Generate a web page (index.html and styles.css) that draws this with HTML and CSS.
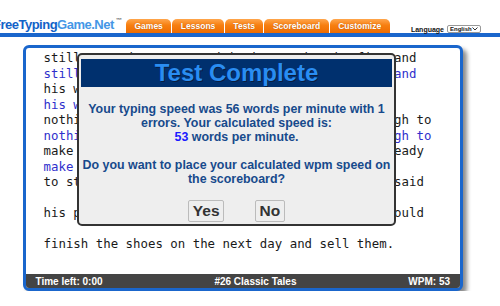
FILE: index.html
```html
<!DOCTYPE html>
<html lang="en">

<head>
  <meta charset="UTF-8" />
  <title>FreeTypingGame.Net - Test Complete</title>
  <link rel="stylesheet" href="styles.css">
</head>

<body>
  <div class="topbar">
    <div class="logo"><span class="logo-dark">FreeTyping</span><span class="logo-light">Game.Net</span><sup>™</sup></div>
    <div class="tabs">
      <a class="tab">Games</a>
      <a class="tab">Lessons</a>
      <a class="tab">Tests</a>
      <a class="tab">Scoreboard</a>
      <a class="tab">Customize</a>
    </div>
    <div class="lang">
      Language
      <span class="lang-select">English
        <svg width="6" height="4" viewBox="0 0 6 4"><path d="M0.5 0.5 L3 3 L5.5 0.5" fill="none" stroke="#333" stroke-width="1"/></svg>
      </span>
    </div>
  </div>

  <div class="board">
    <div class="text">
      <div class="line">still a good man. One night he sat by the fire and</div>
      <div class="line typed">still a good man. One night he sat by the fire and</div>
      <div class="line">his wife. They were so poor that they had</div>
      <div class="line typed">his wife. They were so poor that they had</div>
      <div class="line">nothing left save a piece of leather, just enough to</div>
      <div class="line typed">nothing left save a piece of leather, just enough to</div>
      <div class="line">make one pair of shoes. He cut them out to be ready</div>
      <div class="line typed">make one pair of shoes. He cut</div>
      <div class="line">to start work on them the next morning, and he said</div>
      <div class="line"></div>
      <div class="line">his prayers and went to sleep, hoping that he would</div>
      <div class="line"></div>
      <div class="line">finish the shoes on the next day and sell them.</div>
    </div>

    <div class="status">
      <span>Time left: 0:00</span>
      <span>#26 Classic Tales</span>
      <span>WPM: 53</span>
    </div>

    <div class="dialog">
      <div class="dialog-title">Test Complete</div>
      <div class="dialog-body">
        Your typing speed was 56 words per minute with 1<br>
        errors. Your calculated speed is:<br>
        <span class="score">53</span> words per minute.<br>
        <br>
        Do you want to place your calculated wpm speed on<br>
        the scoreboard?
      </div>
      <div class="dialog-actions">
        <button class="dialog-btn">Yes</button>
        <button class="dialog-btn">No</button>
      </div>
    </div>
  </div>
</body>

</html>
```

FILE: styles.css
```css
body,
html {
  margin: 0;
  padding: 0;
  background: #fff;
  font-family: 'Liberation Sans', Arial, sans-serif;
  color: #222;
  overflow: hidden;
}

.topbar {
  display: flex;
  align-items: flex-end;
  height: 33px;
  border-bottom: 4px solid #1a66cc;
}

.logo {
  flex-shrink: 0;
  width: 133px;
  margin-left: -7px;
  margin-bottom: 1px;
  font-size: 13px;
  line-height: 15px;
  font-weight: bold;
  letter-spacing: -0.5px;
  white-space: nowrap;
}

.logo-dark {
  color: #1262c8;
}

.logo-light {
  color: #4497e6;
}

.logo sup {
  font-size: 6px;
  color: #666;
  letter-spacing: 0;
  vertical-align: 7px;
  margin-left: 2px;
}

.tabs {
  display: flex;
  gap: 1px;
}

.tab {
  display: block;
  height: 14px;
  padding: 0 8.5px;
  line-height: 14px;
  font-size: 8.5px;
  font-weight: bold;
  color: #fff;
  background: linear-gradient(#ffa64d, #f77f10 45%, #ee6c00);
  border-radius: 5px 5px 0 0;
  text-shadow: 0 0 1px rgba(120, 50, 0, 0.5);
}

.lang {
  display: flex;
  align-items: center;
  gap: 3px;
  margin-left: auto;
  margin-right: 19px;
  height: 8px;
  font-size: 7px;
  font-weight: bold;
  color: #111;
}

.lang-select {
  display: flex;
  align-items: center;
  justify-content: space-between;
  box-sizing: border-box;
  width: 34px;
  height: 8px;
  padding: 0 2px;
  border: 1px solid #999;
  border-radius: 2px;
  font-size: 6px;
  background: #fff;
}

.board {
  position: relative;
  display: flex;
  flex-direction: column;
  width: 434px;
  height: 240px;
  margin: 8px 0 0 23px;
  border: 3px solid #1a66cc;
  border-radius: 6px;
  background: #fff;
  box-shadow: 4px 4px 4px rgba(0, 0, 0, 0.45);
  overflow: hidden;
}

.text {
  flex: 1;
  padding: 2px 0 0 17.5px;
  font-family: 'DejaVu Sans Mono', monospace;
  font-size: 12.4px;
  line-height: 15.5px;
  color: #1a1a1a;
  overflow: hidden;
}

.line {
  height: 15.5px;
  white-space: pre;
}

.typed {
  color: #2f2fcc;
}

.status {
  display: flex;
  justify-content: space-between;
  align-items: center;
  flex-shrink: 0;
  height: 14px;
  padding: 0 10px 0 9.5px;
  background: #444;
  color: #fff;
  font-size: 10px;
  font-weight: bold;
}

.dialog {
  position: absolute;
  left: 51px;
  top: 5px;
  box-sizing: border-box;
  width: 319px;
  padding: 4px 2px 2px;
  border: 2px solid #333;
  border-radius: 5px;
  background: #eee;
}

.dialog-title {
  height: 28px;
  line-height: 28px;
  background: #00306e;
  color: #2a8df2;
  text-align: center;
  font-size: 24px;
  font-weight: bold;
  text-shadow: 1px 1px 0 #0b1c3e;
}

.dialog-body {
  margin-top: 15px;
  text-align: center;
  font-size: 12.4px;
  line-height: 14px;
  font-weight: bold;
  color: #174a8c;
}

.score {
  color: #1a1aff;
}

.dialog-actions {
  display: flex;
  justify-content: center;
  gap: 31px;
  margin-top: 14px;
}

.dialog-btn {
  height: 22px;
  padding: 0 3.5px;
  border: 1px solid #bbb;
  border-radius: 2px;
  background: #eee;
  color: #333;
  font-family: 'Liberation Sans', Arial, sans-serif;
  font-size: 15.5px;
  font-weight: bold;
  line-height: 20px;
}
```
